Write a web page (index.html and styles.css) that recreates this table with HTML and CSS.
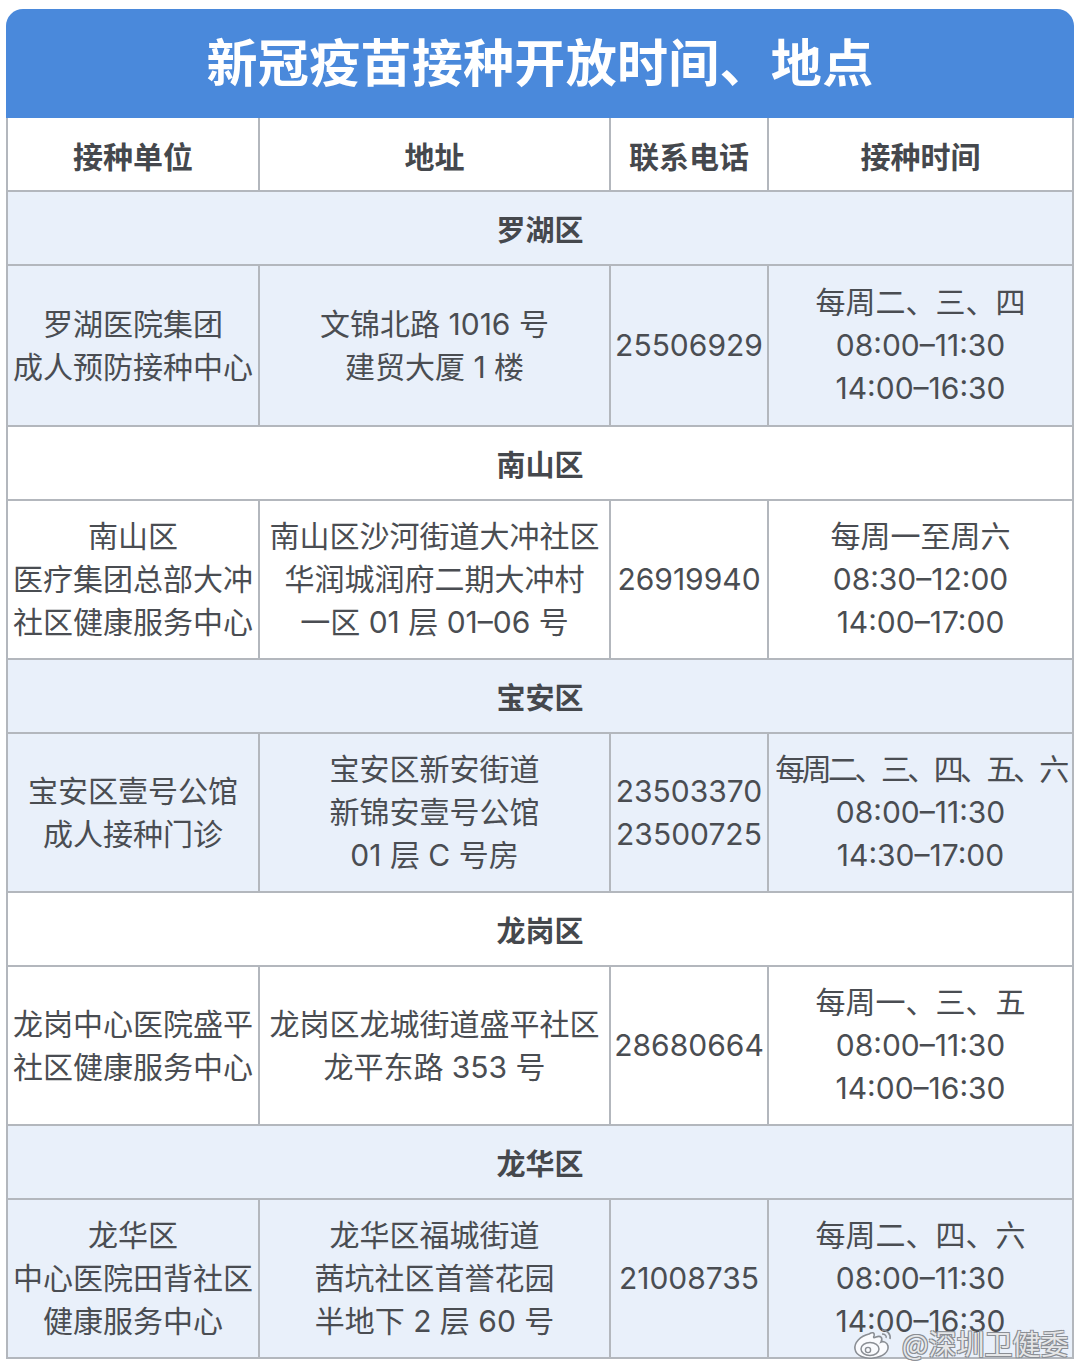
FILE: index.html
```html
<!DOCTYPE html>
<html lang="zh-CN">
<head>
<meta charset="utf-8">
<title>新冠疫苗接种开放时间、地点</title>
<link rel="stylesheet" href="styles.css">
</head>
<body>
<div class="page">
  <div class="card">
    <div class="title">新冠疫苗接种开放时间、地点</div>
    <div class="table">
      <div class="row head">
        <div class="cell"><div class="in">接种单位</div></div>
        <div class="cell"><div class="in">地址</div></div>
        <div class="cell"><div class="in">联系电话</div></div>
        <div class="cell"><div class="in">接种时间</div></div>
      </div>

      <div class="row district tint"><div class="dcell">罗湖区</div></div>
      <div class="row data tint first">
        <div class="cell"><div class="in">罗湖医院集团<br>成人预防接种中心</div></div>
        <div class="cell"><div class="in">文锦北路 1016 号<br>建贸大厦 1 楼</div></div>
        <div class="cell"><div class="in">25506929</div></div>
        <div class="cell"><div class="in">每周二、三、四<br>08:00–11:30<br>14:00–16:30</div></div>
      </div>

      <div class="row district"><div class="dcell">南山区</div></div>
      <div class="row data">
        <div class="cell"><div class="in">南山区<br>医疗集团总部大冲<br>社区健康服务中心</div></div>
        <div class="cell"><div class="in">南山区沙河街道大冲社区<br>华润城润府二期大冲村<br>一区 01 层 01–06 号</div></div>
        <div class="cell"><div class="in">26919940</div></div>
        <div class="cell"><div class="in">每周一至周六<br>08:30–12:00<br>14:00–17:00</div></div>
      </div>

      <div class="row district tint"><div class="dcell">宝安区</div></div>
      <div class="row data tint">
        <div class="cell"><div class="in">宝安区壹号公馆<br>成人接种门诊</div></div>
        <div class="cell"><div class="in">宝安区新安街道<br>新锦安壹号公馆<br>01 层 C 号房</div></div>
        <div class="cell"><div class="in">23503370<br>23500725</div></div>
        <div class="cell"><div class="in"><span class="tight">每周二、三、四、五、六</span><br>08:00–11:30<br>14:30–17:00</div></div>
      </div>

      <div class="row district"><div class="dcell">龙岗区</div></div>
      <div class="row data">
        <div class="cell"><div class="in">龙岗中心医院盛平<br>社区健康服务中心</div></div>
        <div class="cell"><div class="in">龙岗区龙城街道盛平社区<br>龙平东路 353 号</div></div>
        <div class="cell"><div class="in">28680664</div></div>
        <div class="cell"><div class="in">每周一、三、五<br>08:00–11:30<br>14:00–16:30</div></div>
      </div>

      <div class="row district tint"><div class="dcell">龙华区</div></div>
      <div class="row data tint">
        <div class="cell"><div class="in">龙华区<br>中心医院田背社区<br>健康服务中心</div></div>
        <div class="cell"><div class="in">龙华区福城街道<br>茜坑社区首誉花园<br>半地下 2 层 60 号</div></div>
        <div class="cell"><div class="in">21008735</div></div>
        <div class="cell"><div class="in">每周二、四、六<br>08:00–11:30<br>14:00–16:30</div></div>
      </div>
    </div>
  </div>

  <div class="watermark">
    <svg class="wb" width="44" height="34" viewBox="0 0 44 34" aria-hidden="true">
      <path d="M17 8 C8 10 2 17 3 23 C4 30 13 33 21 32 C31 31 37 26 36 20 C35 16 31 15 29 16 C31 12 29 9 24 11 C22 12 21 12 22 10 C23 6 20 6 17 8 Z" fill="rgba(255,255,255,0.75)" stroke="#8a8e94" stroke-width="1.6"/>
      <ellipse cx="18" cy="23" rx="9" ry="6.5" fill="none" stroke="#8a8e94" stroke-width="1.5"/>
      <circle cx="16" cy="24" r="2.6" fill="none" stroke="#8a8e94" stroke-width="1.4"/>
      <path d="M30 4 C35 4 39 8 38 13" fill="none" stroke="#8a8e94" stroke-width="1.6"/>
      <path d="M30 8 C33 8 35 10 34 12" fill="none" stroke="#8a8e94" stroke-width="1.4"/>
    </svg>
    <span class="wtext">@深圳卫健委</span>
  </div>
</div>
</body>
</html>
```

FILE: styles.css
```css
* {
  box-sizing: border-box;
}

html, body {
  margin: 0;
  padding: 0;
  background: #ffffff;
}

body {
  width: 1080px;
  height: 1370px;
  overflow: hidden;
  font-family: Inter, "Noto Sans CJK SC", sans-serif;
  color: #4a4d52;
}

.page {
  position: relative;
  width: 1080px;
  height: 1370px;
  padding: 9px 0 0 6px;
}

.card {
  width: 1068px;
}

.title {
  height: 109px;
  background: #4a89db;
  border-radius: 17px 17px 0 0;
  color: #ffffff;
  font-family: "Noto Sans CJK SC", sans-serif;
  font-weight: 700;
  font-size: 51px;
  display: flex;
  align-items: center;
  justify-content: center;
  padding-bottom: 8px;
  letter-spacing: 0.3px;
}

.table {
  border-left: 2px solid #b3b7bd;
  border-right: 2px solid #b3b7bd;
}

.row {
  display: grid;
  grid-template-columns: 252px 351px 158px 1fr;
  border-bottom: 2px solid #b3b7bd;
  background: #ffffff;
}

.row.tint {
  background: #e9f0fa;
}

.row.head {
  height: 74px;
}

.row.district {
  height: 74px;
  grid-template-columns: 1fr;
}

.row.data {
  height: 159px;
}

.row.data.first {
  height: 161px;
}

.cell {
  display: flex;
  align-items: center;
  justify-content: center;
  text-align: center;
  border-right: 2px solid #b3b7bd;
  font-size: 30px;
  line-height: 43px;
  white-space: nowrap;
}

.cell:last-child {
  border-right: none;
}

.in {
  text-align: center;
}

.head .cell {
  font-family: "Noto Sans CJK SC", sans-serif;
  font-weight: 700;
  color: #45484d;
  padding-top: 2px;
}

.dcell {
  display: flex;
  align-items: center;
  justify-content: center;
  font-family: "Noto Sans CJK SC", sans-serif;
  font-weight: 700;
  font-size: 29px;
  color: #45484d;
}

.tight {
  letter-spacing: -3.6px;
}

.watermark {
  position: absolute;
  left: 852px;
  top: 1323px;
  display: flex;
  align-items: center;
  gap: 6px;
  white-space: nowrap;
}

.wtext {
  font-family: "Noto Sans CJK SC", sans-serif;
  font-size: 28px;
  line-height: 40px;
  color: rgba(255, 255, 255, 0.8);
  text-shadow: -1px -1px 0 #8a8e94, 1px -1px 0 #8a8e94, -1px 1px 0 #8a8e94, 1px 1px 0 #8a8e94;
}
```
